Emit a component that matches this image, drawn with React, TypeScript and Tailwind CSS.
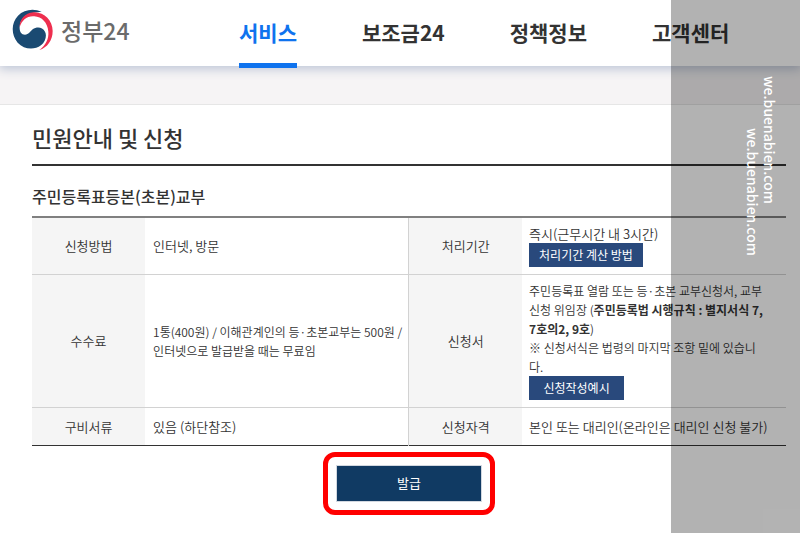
import type { ReactNode } from 'react';
import clsx from 'clsx';

const menus = [
  { id: 'service', name: '서비스' },
  { id: 'subsidy', name: '보조금24' },
  { id: 'policy', name: '정책정보' },
  { id: 'support', name: '고객센터' },
];

const activeMenu = 'service';

function Emblem() {
  return (
    <svg viewBox="37 29 126 126" className="h-[42px] w-[42px]" aria-hidden="true">
      <path
        fill="#1a4a72"
        d="M126 38C102 26 73 31 55 49C34 70 34 107 54 130C73 151 104 153 124 138C138 127 142 108 136 97C128 82 111 81 99 90C91 97 87 106 76 106C64 106 59 95 60 82C62 60 78 44 98 41C108 39 118 38 126 38Z"
      />
      <path
        fill="#ee2f4f"
        d="M60 84C59 60 76 41 101 39C133 37 159 63 159 95C159 123 143 145 119 152C138 138 148 118 146 97C144 70 126 52 104 51C82 49 66 63 60 84Z"
      />
    </svg>
  );
}

function RowHead({ children, divided }: { children: ReactNode; divided?: boolean }) {
  return (
    <th
      scope="row"
      className={clsx(
        'w-[15%] bg-[#f5f5f5] px-2 text-center font-[350]',
        divided && 'border-l border-[#d2d2d2]'
      )}
    >
      {children}
    </th>
  );
}

function GuideButton({ children }: { children: ReactNode }) {
  return (
    <button type="button" className="block h-6 min-w-[95px] bg-[#29497c] px-2.5 text-xs leading-6 font-normal text-white">
      {children}
    </button>
  );
}

export default function App() {
  return (
    <div className="relative min-h-screen bg-white font-['Noto_Sans_CJK_KR','Noto_Sans',sans-serif] text-[#333]">
      <header className="relative flex h-[66px] items-center bg-white pl-3 shadow-[0_2px_10px_1px_#bcc5d6]">
        <a href="#home" className="flex w-[227px] items-center gap-[7px] pb-1.5 text-[23px] font-medium text-[#6b6b6b]">
          <Emblem />
          정부24
        </a>
        <nav className="flex h-full gap-[65px]">
          {menus.map((menu) => (
            <a
              key={menu.id}
              href={`#${menu.id}`}
              className={clsx(
                'h-[68px] text-[21px] leading-[64px] font-bold whitespace-nowrap',
                menu.id === activeMenu && 'border-b-5 border-[#0f73ee] text-[#0f73ee]'
              )}
            >
              {menu.name}
            </a>
          ))}
        </nav>
      </header>
      <div className="h-[39px] border-b border-[#e6e6e6] bg-[#f6f4f5]" />

      <main className="pr-3.5 pb-4 pl-8">
        <h1 className="border-b-2 border-[#333] pt-4 pb-[11px] text-[22px] leading-8 font-medium">
          민원안내 및 신청
        </h1>
        <h2 className="pt-4 pb-1.5 text-base leading-7 font-medium">주민등록표등본(초본)교부</h2>

        <table className="w-full table-fixed border-collapse border-t-2 border-b border-t-[#808080] border-b-[#333] text-[13px] leading-[19px] font-[350]">
          <tbody>
            <tr className="h-[57px] border-b border-[#d2d2d2]">
              <RowHead>신청방법</RowHead>
              <td className="w-[35%] px-2">인터넷, 방문</td>
              <RowHead divided>처리기간</RowHead>
              <td className="w-[35%] px-[7px]">
                즉시(근무시간 내 3시간)
                <GuideButton>처리기간 계산 방법</GuideButton>
              </td>
            </tr>
            <tr className="h-[133px] border-b border-[#d2d2d2]">
              <RowHead>수수료</RowHead>
              <td className="px-2 text-xs leading-[19px] whitespace-nowrap">
                1통(400원) / 이해관계인의 등·초본교부는 500원 /<br />
                인터넷으로 발급받을 때는 무료임
              </td>
              <RowHead divided>신청서</RowHead>
              <td className="px-[7px] text-xs leading-[19px] whitespace-nowrap">
                주민등록표 열람 또는 등·초본 교부신청서, 교부
                <br />
                신청 위임장 (<b className="font-bold">주민등록법 시행규칙 : 별지서식 7,</b>
                <br />
                <b className="font-bold">7호의2, 9호</b>)<br />
                ※ 신청서식은 법령의 마지막 조항 밑에 있습니
                <br />
                다.
                <GuideButton>신청작성예시</GuideButton>
              </td>
            </tr>
            <tr className="h-[38px]">
              <RowHead>구비서류</RowHead>
              <td className="px-2">있음 (하단참조)</td>
              <RowHead divided>신청자격</RowHead>
              <td className="px-[7px] whitespace-nowrap">본인 또는 대리인(온라인은 대리인 신청 불가)</td>
            </tr>
          </tbody>
        </table>

        <div className="mt-1.5 flex justify-center">
          <div className="rounded-xl border-5 border-[#f00] p-2">
            <button
              type="button"
              className="block h-[37px] w-[146px] border border-[#d2d8e0] bg-[#103a63] text-[13px] text-white"
            >
              발급
            </button>
          </div>
        </div>
      </main>

      {/* Watermark strip */}
      <div className="pointer-events-none absolute inset-y-0 right-0 w-[129px] bg-black/30 text-sm leading-[17px] font-medium text-white">
        <span className="absolute top-[76px] right-[22px] [writing-mode:vertical-rl]">we.buenabien.com</span>
        <span className="absolute top-[128px] right-[39px] [writing-mode:vertical-rl]">we.buenabien.com</span>
      </div>
    </div>
  );
}
